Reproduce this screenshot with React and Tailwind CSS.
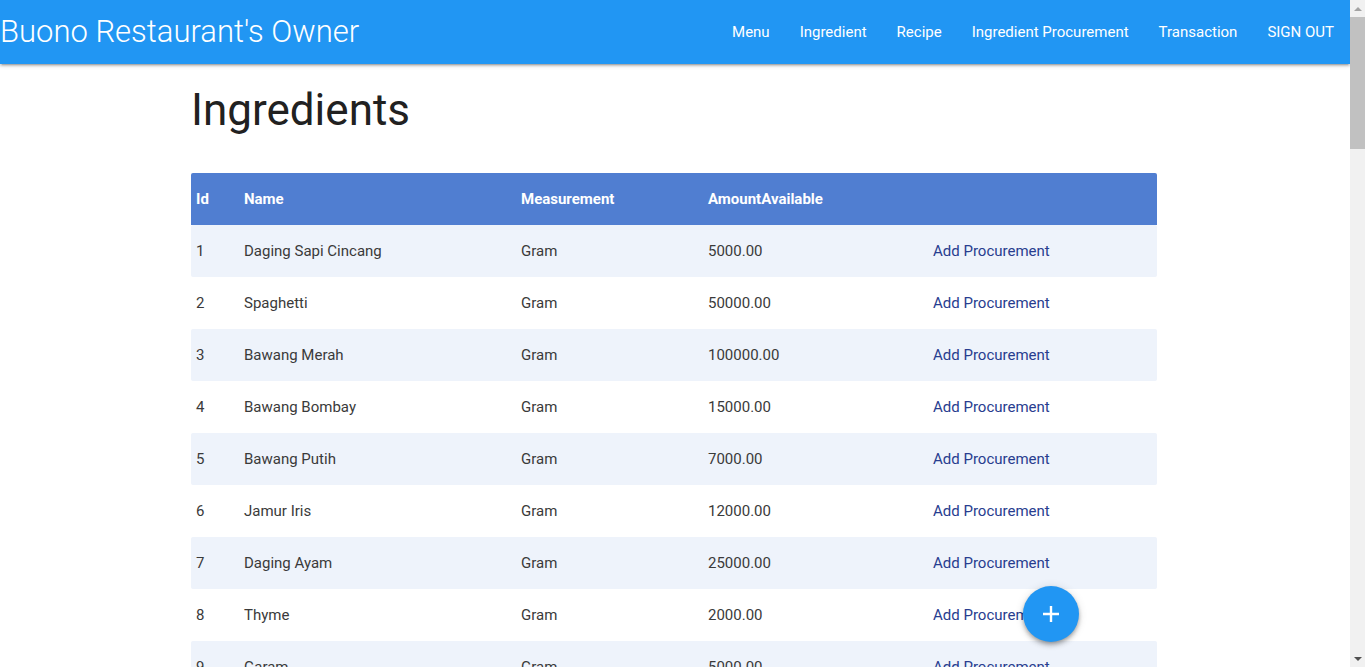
const NAV = ['Menu', 'Ingredient', 'Recipe', 'Ingredient Procurement', 'Transaction', 'SIGN OUT']

const ROWS = [
  [1, 'Daging Sapi Cincang', 'Gram', '5000.00'],
  [2, 'Spaghetti', 'Gram', '50000.00'],
  [3, 'Bawang Merah', 'Gram', '100000.00'],
  [4, 'Bawang Bombay', 'Gram', '15000.00'],
  [5, 'Bawang Putih', 'Gram', '7000.00'],
  [6, 'Jamur Iris', 'Gram', '12000.00'],
  [7, 'Daging Ayam', 'Gram', '25000.00'],
  [8, 'Thyme', 'Gram', '2000.00'],
  [9, 'Garam', 'Gram', '5000.00'],
  [10, 'Merica', 'Gram', '3000.00'],
  [11, 'Minyak Zaitun', 'Mililiter', '10000.00'],
  [12, 'Keju Parmesan', 'Gram', '4000.00'],
]

export default function App() {
  return (
    <div className="h-screen flex bg-white font-['Roboto',sans-serif] text-[15px] text-[#3a3a3a]">
      <div className="flex-1 overflow-hidden relative">
        <nav className="h-16 bg-[#2196f3] text-white flex items-center justify-between pr-px shadow-[0_2px_2px_0_rgba(0,0,0,0.14),0_3px_1px_-2px_rgba(0,0,0,0.12),0_1px_5px_0_rgba(0,0,0,0.2)] relative z-10">
          <span className="text-[31px] font-light leading-none pb-[1px]">Buono Restaurant's Owner</span>
          <ul className="flex">
            {NAV.map((n) => (
              <li key={n} className="px-[15px] text-[15px] leading-[64px]">{n}</li>
            ))}
          </ul>
        </nav>

        <div className="w-[966px] ml-[191px]">
          <h1 className="text-[44px] leading-[110%] font-normal text-[#212121] mt-[22px] mb-[39px]">Ingredients</h1>

          <table className="w-full border-separate border-spacing-0 mb-10">
            <thead>
              <tr className="bg-[#507ed1] text-white font-bold">
                <th className="w-[48px] h-[52px] text-left pl-[5px] rounded-tl-[2px]">Id</th>
                <th className="w-[277px] text-left pl-[5px]">Name</th>
                <th className="w-[187px] text-left pl-[5px]">Measurement</th>
                <th className="w-[225px] text-left pl-[5px]">AmountAvailable</th>
                <th className="rounded-tr-[2px]"></th>
              </tr>
            </thead>
            <tbody>
              {ROWS.map(([id, name, unit, amt], i) => (
                <tr key={id} className={i % 2 === 0 ? 'bg-[#eef3fb]' : 'bg-white'}>
                  <td className="h-[52px] pl-[5px] rounded-l-[2px]">{id}</td>
                  <td className="pl-[5px]">{name}</td>
                  <td className="pl-[5px]">{unit}</td>
                  <td className="pl-[5px]">{amt}</td>
                  <td className="pl-[5px] text-[#283d8f] rounded-r-[2px]">Add Procurement</td>
                </tr>
              ))}
            </tbody>
          </table>
        </div>

        <button className="absolute left-[1023px] top-[586px] w-14 h-14 rounded-full bg-[#2196f3] text-white flex items-center justify-center shadow-[0_4px_5px_0_rgba(0,0,0,0.14),0_1px_10px_0_rgba(0,0,0,0.12),0_2px_4px_-1px_rgba(0,0,0,0.3)]">
          <svg width="18" height="18" viewBox="0 0 18 18">
            <path d="M9 1v16M1 9h16" stroke="white" strokeWidth="2.4" />
          </svg>
        </button>
      </div>

      {/* scrollbar */}
      <div className="w-[15px] bg-[#f1f1f1] flex flex-col items-center">
        <div className="h-[17px] flex items-center justify-center">
          <div className="w-0 h-0 border-l-[4px] border-r-[4px] border-b-[4px] border-l-transparent border-r-transparent border-b-[#a3a3a3]" />
        </div>
        <div className="w-[15px] h-[132px] bg-[#c1c1c1]" />
        <div className="flex-1" />
        <div className="h-[17px] flex items-center justify-center">
          <div className="w-0 h-0 border-l-[4px] border-r-[4px] border-t-[4px] border-l-transparent border-r-transparent border-t-[#505050]" />
        </div>
      </div>
    </div>
  )
}
